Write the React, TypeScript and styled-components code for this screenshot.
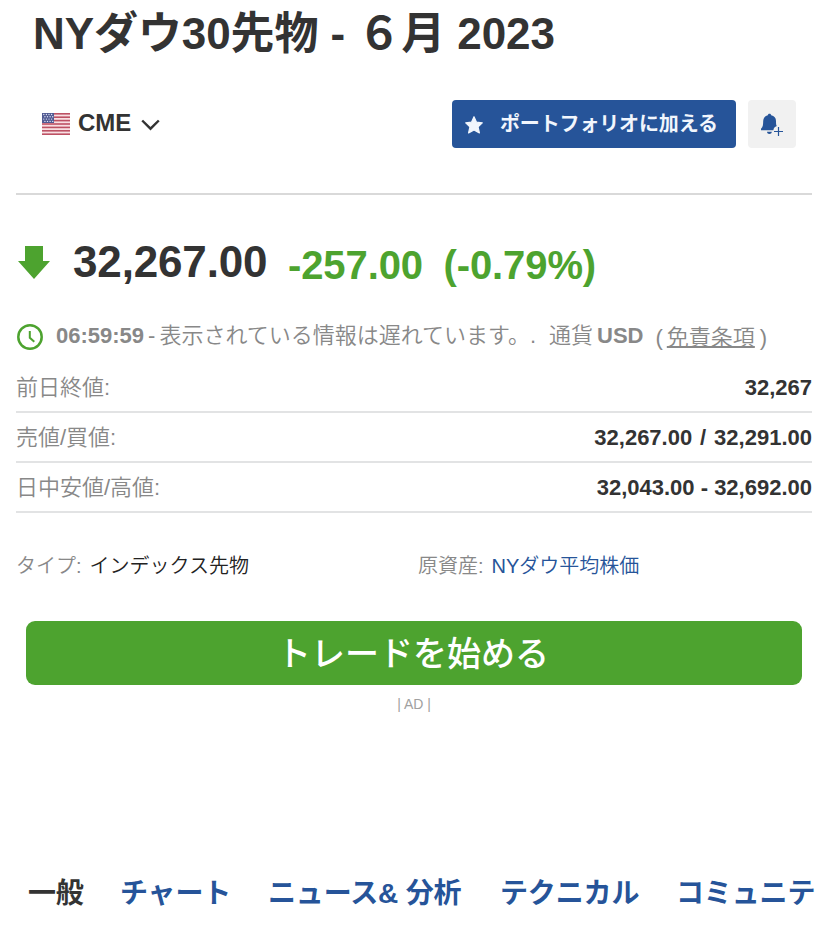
import React from "react";
import styled, { createGlobalStyle } from "styled-components";

const GlobalStyle = createGlobalStyle`
  * { box-sizing: border-box; }
  body {
    margin: 0;
    background: #fff;
    color: #333;
    font-family: "Liberation Sans", "Noto Sans CJK JP", sans-serif;
    overflow: hidden;
  }
`;

const Page = styled.main`
  width: 828px;
  height: 925px;
  overflow: hidden;
  display: flex;
  flex-direction: column;
`;

const Title = styled.h1`
  margin: 0;
  padding-left: 33px;
  font-size: 44px;
  line-height: 68px;
  font-weight: 700;
  letter-spacing: -0.08px;
  white-space: nowrap;
`;

const Toolbar = styled.div`
  display: flex;
  align-items: center;
  height: 48px;
  margin: 32px 32px 0 42px;
`;

const Exchange = styled.div`
  display: flex;
  align-items: center;
  font-size: 24px;
  font-weight: 700;
  line-height: 46px;
  flex: 1;
`;

const ExchangeName = styled.span`
  margin: -2px 10px 0 8px;
`;

const PortfolioButton = styled.button`
  display: flex;
  align-items: center;
  width: 284px;
  height: 48px;
  padding: 0 0 0 12px;
  border: 0;
  border-radius: 4px;
  background: #265499;
  color: #f1f6fd;
  font: 700 20px/46px "Liberation Sans", "Noto Sans CJK JP", sans-serif;
  white-space: nowrap;
`;

const ButtonText = styled.span`
  margin: -1px 0 0 16px;
  letter-spacing: -0.15px;
`;

const AlertButton = styled.button`
  display: flex;
  align-items: center;
  justify-content: center;
  width: 48px;
  height: 48px;
  margin-left: 12px;
  padding: 0;
  border: 0;
  border-radius: 4px;
  background: #f1f1f1;
`;

const Divider = styled.div`
  height: 2px;
  margin: 45px 16px 0;
  background: #d9d9d9;
`;

const Quote = styled.div`
  display: flex;
  align-items: flex-start;
  height: 56px;
  margin: 39px 0 0 18px;
  font-weight: 700;
  white-space: nowrap;
`;

const ArrowIcon = styled.svg`
  margin-top: 12px;
`;

const Price = styled.span`
  width: 215px;
  margin-left: 23px;
  font-size: 44px;
  line-height: 56px;
  letter-spacing: -0.15px;
`;

const Change = styled.span`
  width: 155.5px;
  padding-top: 3px;
  font-size: 40px;
  line-height: 56px;
  letter-spacing: -0.1px;
  color: #4da32f;
`;

const StatusLine = styled.div`
  display: flex;
  height: 28px;
  margin: 32px 0 0 17px;
  font-size: 22px;
  line-height: 27px;
  font-weight: 350;
  color: #888;
  white-space: nowrap;
`;

const ClockIcon = styled.svg`
  margin: 2px 13px 0 0;
`;

const StatusStrong = styled.strong`
  font-weight: 700;
`;

const Dash = styled.span`
  margin: 0 4px;
`;

const Currency = styled.span`
  margin: 0 4px 0 13px;
`;

const Disclaimer = styled.span`
  margin: 2px 0 0 12px;
`;

const DisclaimerLink = styled.a`
  margin: 0 5px 0 4px;
  text-decoration: underline;
  text-decoration-thickness: 2px;
  text-underline-offset: 1px;
`;

const Stats = styled.dl`
  margin: 13px 16px 0;
`;

const StatRow = styled.div`
  display: flex;
  justify-content: space-between;
  height: 50px;
  border-bottom: 2px solid #e2e3e4;
  font-size: 22px;
  line-height: 49px;
`;

const StatLabel = styled.dt`
  color: #888;
  font-weight: 350;
`;

const StatValue = styled.dd<{ $gap: number }>`
  margin: 0;
  font-weight: 700;
  word-spacing: ${(p) => p.$gap}px;
`;

const Details = styled.div`
  display: grid;
  grid-template-columns: 402px 1fr;
  margin: 38px 16px 0;
  font-size: 20px;
  line-height: 30px;
  font-weight: 350;
`;

const Detail = styled.div`
  color: #888;
`;

const DetailValue = styled.span<{ $link?: boolean }>`
  margin-left: 8px;
  color: ${(p) => (p.$link ? "#265499" : "#222")};
`;

const TradeButton = styled.button`
  height: 64px;
  margin: 40px 26px 0;
  border: 0;
  border-radius: 9px;
  background: #4da32f;
  color: #fff;
  font: 500 34px/62px "Noto Sans CJK JP", sans-serif;
  padding: 0 2px 2px 0;
`;

const AdLabel = styled.div`
  margin-top: 10px;
  text-align: center;
  font-size: 14px;
  line-height: 18px;
  color: #a0a0a0;
`;

const Tabs = styled.nav`
  display: flex;
  margin: 157px 0 0 28px;
  font-size: 28px;
  font-weight: 700;
  line-height: 48px;
  letter-spacing: -0.15px;
  white-space: nowrap;
`;

const Tab = styled.a<{ $active?: boolean; $width: number }>`
  flex: 0 0 ${(p) => p.$width}px;
  color: ${(p) => (p.$active ? "#333" : "#265499")};
`;

const stripes = [0, 1, 2, 3, 4, 5, 6];

const Flag = () => (
  <svg width="28" height="22" viewBox="0 0 28 22">
    <rect width="28" height="22" fill="#f8dfe2" />
    {stripes.map((i) => (
      <rect key={i} y={i * 3.4} width="28" height="1.6" fill="#bd5264" />
    ))}
    <rect width="12" height="10" fill="#515a92" />
    {[0, 1, 2, 3].map((r) =>
      [0, 1, 2, 3].map((c) => (
        <circle key={`${r}-${c}`} cx={1.8 + c * 2.6 + (r % 2) * 1.1} cy={1.5 + r * 2.3} r="0.7" fill="#dfe2f4" />
      ))
    )}
  </svg>
);

const Star = () => (
  <svg width="20" height="20" viewBox="0 0 20 20">
    <path
      d="M10 2.7 12.5 8.2 18.3 8.8 14.1 12.9 15.4 18.9 10 16 4.6 18.9 5.9 12.9 1.7 8.8 7.5 8.2Z"
      fill="#f1f6fd"
      stroke="#f1f6fd"
      strokeWidth="1.2"
      strokeLinejoin="round"
    />
  </svg>
);

const Bell = () => (
  <svg width="24" height="24" viewBox="0 0 24 24">
    <path
      d="M9.5 1.8c1 0 1.6.6 1.7 1.5 3 .8 4.8 2.7 4.8 5.6 0 2.5.1 4.1.8 5.2-2 .7-3.2 2-3.4 4.2H1v-1.6C3.1 15 3.1 12.3 3.2 9c.1-3 1.8-5 4.6-5.7.1-.9.7-1.5 1.7-1.5Z"
      fill="#265499"
    />
    <path d="M7 19.7h4.8c-.2 1.5-1 2.2-2.4 2.2S7.2 21.2 7 19.7Z" fill="#265499" />
    <path d="M18.5 15v9M14 19.5h9" stroke="#265499" strokeWidth="1.2" />
  </svg>
);

const stats = [
  { label: "前日終値:", value: "32,267", gap: 0 },
  { label: "売値/買値:", value: "32,267.00 / 32,291.00", gap: 1.8 },
  { label: "日中安値/高値:", value: "32,043.00 - 32,692.00", gap: 0 },
];

const tabs = [
  { label: "一般", width: 92, active: true },
  { label: "チャート", width: 148 },
  { label: "ニュース& 分析", width: 232 },
  { label: "テクニカル", width: 176 },
  { label: "コミュニテ", width: 140 },
];

export default function App() {
  return (
    <>
      <GlobalStyle />
      <Page>
        <Title>NYダウ30先物 - ６月 2023</Title>
        <Toolbar>
          <Exchange>
            <Flag />
            <ExchangeName>CME</ExchangeName>
            <svg width="20" height="14" viewBox="0 0 20 14">
              <path d="M1.2 3.5 9.5 11.7 17.8 3.5" fill="none" stroke="#333" strokeWidth="2.4" />
            </svg>
          </Exchange>
          <PortfolioButton>
            <Star />
            <ButtonText>ポートフォリオに加える</ButtonText>
          </PortfolioButton>
          <AlertButton aria-label="アラート">
            <Bell />
          </AlertButton>
        </Toolbar>
        <Divider />
        <Quote>
          <ArrowIcon width="32" height="33" viewBox="0 0 32 33">
            <path d="M7 0h18v15h7L16 33 0 15h7Z" fill="#4da32f" />
          </ArrowIcon>
          <Price>32,267.00</Price>
          <Change>-257.00</Change>
          <Change>(-0.79%)</Change>
        </Quote>
        <StatusLine>
          <ClockIcon width="26" height="26" viewBox="0 0 26 26">
            <circle cx="13" cy="13" r="11.7" fill="none" stroke="#4da32f" strokeWidth="2.5" />
            <path d="M12.8 7v6.7l4.5 4" fill="none" stroke="#4da32f" strokeWidth="2" />
          </ClockIcon>
          <StatusStrong>06:59:59</StatusStrong>
          <Dash>-</Dash>
          <span>表示されている情報は遅れています。.</span>
          <Currency>通貨</Currency>
          <StatusStrong>USD</StatusStrong>
          <Disclaimer>
            (<DisclaimerLink>免責条項</DisclaimerLink>)
          </Disclaimer>
        </StatusLine>
        <Stats>
          {stats.map((s) => (
            <StatRow key={s.label}>
              <StatLabel>{s.label}</StatLabel>
              <StatValue $gap={s.gap}>{s.value}</StatValue>
            </StatRow>
          ))}
        </Stats>
        <Details>
          <Detail>
            タイプ:<DetailValue>インデックス先物</DetailValue>
          </Detail>
          <Detail>
            原資産:<DetailValue $link>NYダウ平均株価</DetailValue>
          </Detail>
        </Details>
        <TradeButton>トレードを始める</TradeButton>
        <AdLabel>| AD |</AdLabel>
        <Tabs>
          {tabs.map((t) => (
            <Tab key={t.label} $active={t.active} $width={t.width}>
              {t.label}
            </Tab>
          ))}
        </Tabs>
      </Page>
    </>
  );
}
